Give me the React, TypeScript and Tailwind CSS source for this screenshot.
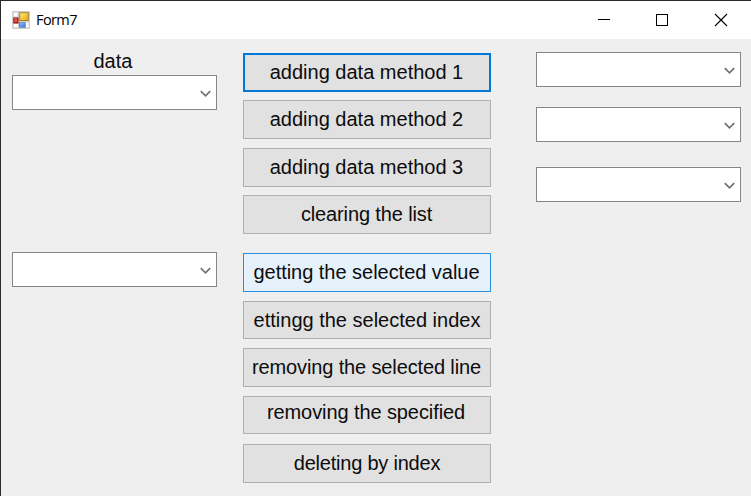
import React from "react";

function Combo({ className = "" }: { className?: string }) {
  return (
    <div
      role="combobox"
      className={`flex w-[205px] h-[35px] shrink-0 items-center justify-end border border-[#868686] bg-white pr-[5px] ${className}`}
    >
      <svg width="11" height="8" viewBox="0 0 11 8" fill="none" className="mt-[2px]">
        <path d="M0.8 1.2 L5.5 5.9 L10.2 1.2" stroke="#717171" strokeWidth="1.7" />
      </svg>
    </div>
  );
}

function FormButton({
  label,
  look = "border border-[#b0b0b0] bg-[#e1e1e1]",
  className = "h-[39px]",
  textClass = "",
}: {
  label: string;
  look?: string;
  className?: string;
  textClass?: string;
}) {
  return (
    <button
      className={`flex w-[248px] shrink-0 items-center justify-center whitespace-nowrap px-0 pt-0 text-[20px] leading-[22px] ${look} ${className}`}
    >
      <span className={textClass}>{label}</span>
    </button>
  );
}

function AppIcon() {
  return (
    <svg width="18" height="18" viewBox="0 0 18 18">
      <defs>
        <linearGradient id="gold" x1="0" y1="0" x2="1" y2="1">
          <stop offset="0" stopColor="#ffe680" />
          <stop offset="1" stopColor="#eeaa08" />
        </linearGradient>
        <linearGradient id="blue" x1="0" y1="0" x2="1" y2="1">
          <stop offset="0" stopColor="#8dbcf8" />
          <stop offset="1" stopColor="#3c78dc" />
        </linearGradient>
      </defs>
      <rect width="18" height="18" rx="0.8" fill="#cfcdca" />
      <rect x="1.5" y="1.5" width="4" height="4" fill="#fafafa" />
      <rect x="1.5" y="13" width="4.5" height="3.5" fill="#fafafa" />
      <rect x="14" y="11.5" width="2.5" height="5" fill="#fafafa" />
      <rect x="7.3" y="1.3" width="9.4" height="8.7" fill="#a67c14" />
      <rect x="8.2" y="2.2" width="7.6" height="6.9" fill="url(#gold)" />
      <rect x="1.2" y="6.5" width="5.4" height="6" fill="#a32020" />
      <rect x="2.2" y="7.5" width="3" height="3.4" fill="#d85a4c" />
      <rect x="7" y="11.4" width="6.5" height="5.2" fill="#3f74cc" />
      <rect x="7.7" y="12" width="5.1" height="4" fill="url(#blue)" />
    </svg>
  );
}

export default function App() {
  return (
    <div className="flex h-[496px] w-[751px] flex-col overflow-hidden border-l border-t border-[#2b292b] bg-[#efefef] font-['Liberation_Sans',Arial,sans-serif] text-[#0c0c0c]">
      <header className="flex h-[38px] shrink-0 items-center bg-white pl-[11px]">
        <AppIcon />
        <span className="ml-[6px] flex-1 pb-px font-['Open_Sans','Noto_Sans',sans-serif] text-[14.5px] leading-5 tracking-[-0.6px] text-black">
          Form7
        </span>
        <svg width="161" height="38" viewBox="0 0 161 38" fill="none" stroke="#000" className="shrink-0">
          <path d="M8 18.5 H20" shapeRendering="crispEdges" />
          <rect x="66.5" y="13.5" width="11" height="11" shapeRendering="crispEdges" />
          <path d="M125 13 L137 25 M137 13 L125 25" strokeWidth="1.1" />
        </svg>
      </header>
      <main className="flex min-h-0 flex-1">
        <section className="ml-[11px] flex w-[205px] flex-col pt-[11px]">
          <label className="pl-[81.5px] text-[20px] leading-[23px]">data</label>
          <Combo className="mt-[2px]" />
          <Combo className="mt-[142px]" />
        </section>
        <section className="ml-[26px] flex w-[248px] flex-col pt-[14px]">
          <FormButton
            label="adding data method 1"
            look="border-[2px] border-[#0078d7] bg-[#e1e1e1]"
            className="h-[39px] pb-[2px]"
            textClass="-ml-px"
          />
          <FormButton label="adding data method 2" className="mt-[8px] h-[39px] pb-[2px]" textClass="-ml-px" />
          <FormButton label="adding data method 3" className="mt-[9px] h-[39px] pb-[2px]" textClass="-ml-px" />
          <FormButton
            label="clearing the list"
            className="mt-[8px] h-[39px] pb-[2px]"
            textClass="-ml-px tracking-[-0.13px]"
          />
          <FormButton
            label="getting the selected value"
            look="border border-[#2b8fdf] bg-[#e5f1fb]"
            className="mt-[19px] h-[39px] pb-[2px]"
            textClass="-ml-px tracking-[-0.03px]"
          />
          <FormButton label="ettingg the selected index" className="mt-[9px] h-[38px] pb-px" />
          <FormButton
            label="removing the selected line"
            className="mt-[9px] h-[39px] pb-[2px]"
            textClass="-ml-px tracking-[-0.13px]"
          />
          <FormButton
            label="removing the specified"
            className="mt-[9px] h-[38px] pb-[7px]"
            textClass="-ml-[2px] tracking-[-0.09px]"
          />
          <FormButton
            label="deleting by index"
            className="mt-[10px] h-[39px] pb-px"
            textClass="tracking-[-0.22px]"
          />
        </section>
        <section className="ml-[45px] flex w-[205px] flex-col pt-[13px]">
          <Combo />
          <Combo className="mt-[20px]" />
          <Combo className="mt-[25px]" />
        </section>
      </main>
    </div>
  );
}
